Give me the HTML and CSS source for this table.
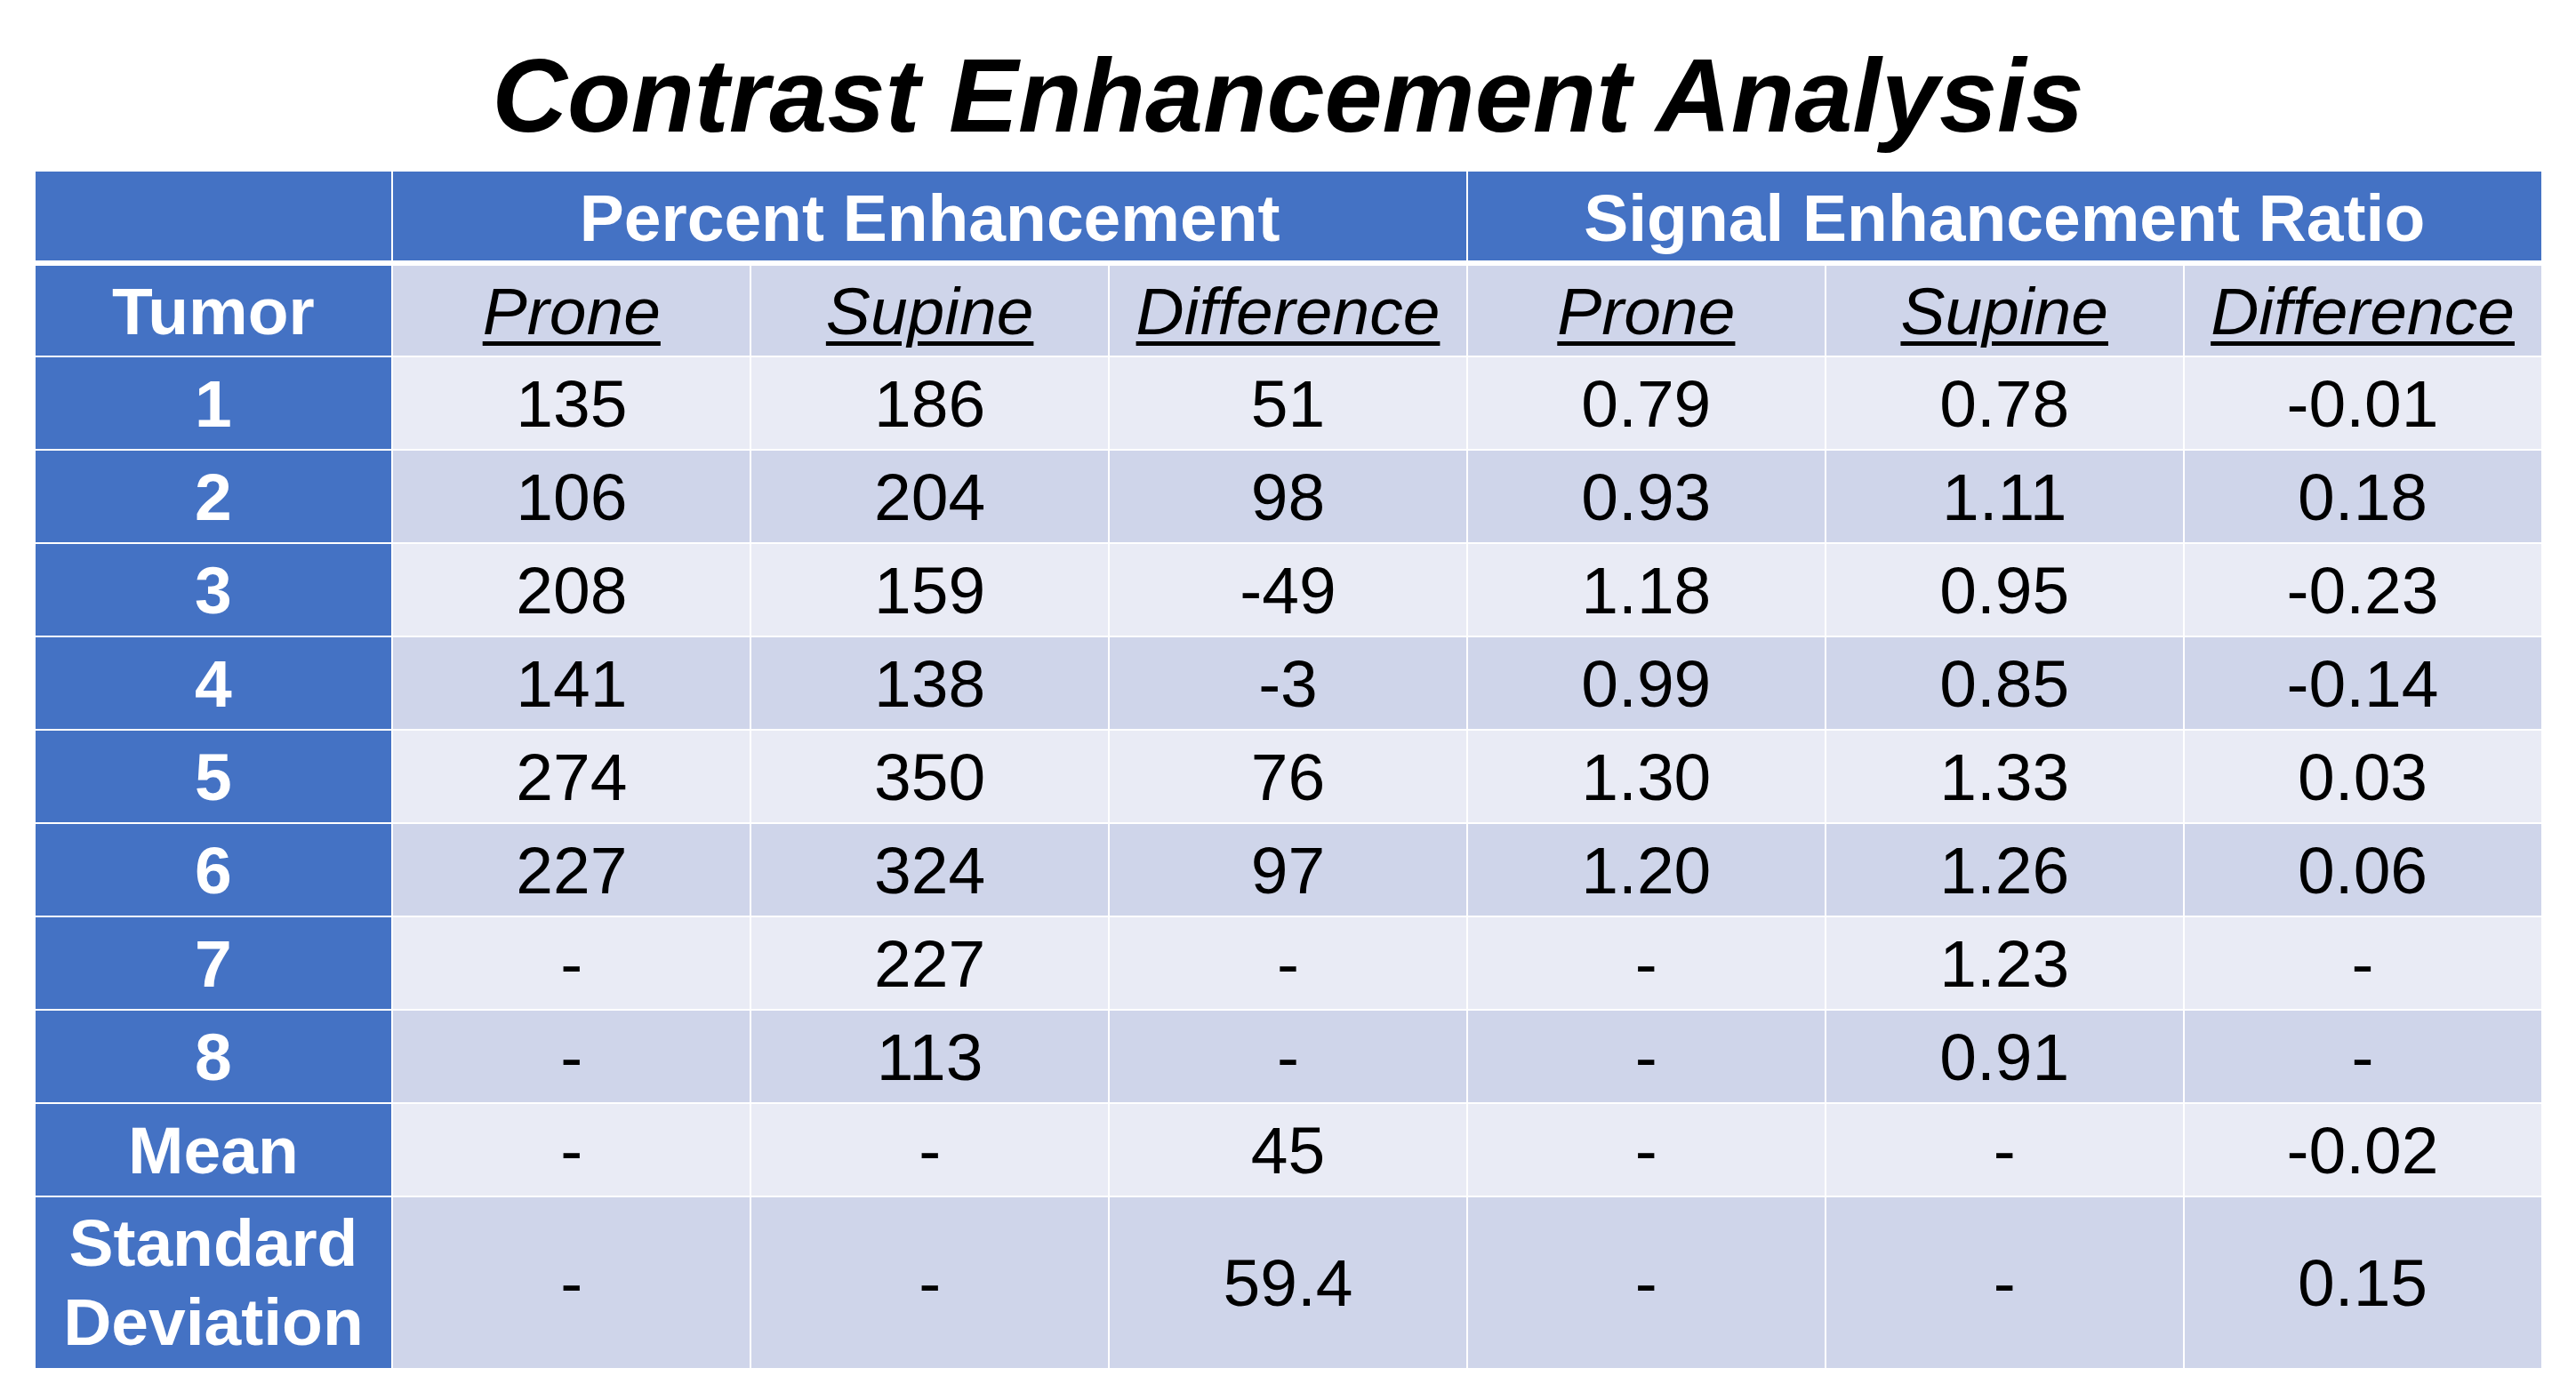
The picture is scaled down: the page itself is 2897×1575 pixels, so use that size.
FILE: index.html
```html
<!DOCTYPE html>
<html lang="en">
<head>
<meta charset="utf-8">
<title>Contrast Enhancement Analysis</title>
<link rel="stylesheet" href="styles.css">
</head>
<body>
<div class="page">
  <h1 class="title">Contrast Enhancement Analysis</h1>
  <div class="table">
    <div class="cell head corner"></div>
    <div class="cell head group span3">Percent Enhancement</div>
    <div class="cell head group span3">Signal Enhancement Ratio</div>

    <div class="cell side sub">Tumor</div>
    <div class="cell dark sub"><u>Prone</u></div>
    <div class="cell dark sub"><u>Supine</u></div>
    <div class="cell dark sub"><u>Difference</u></div>
    <div class="cell dark sub"><u>Prone</u></div>
    <div class="cell dark sub"><u>Supine</u></div>
    <div class="cell dark sub"><u>Difference</u></div>

    <div class="cell side">1</div>
    <div class="cell light">135</div><div class="cell light">186</div><div class="cell light">51</div>
    <div class="cell light">0.79</div><div class="cell light">0.78</div><div class="cell light">-0.01</div>

    <div class="cell side">2</div>
    <div class="cell dark">106</div><div class="cell dark">204</div><div class="cell dark">98</div>
    <div class="cell dark">0.93</div><div class="cell dark">1.11</div><div class="cell dark">0.18</div>

    <div class="cell side">3</div>
    <div class="cell light">208</div><div class="cell light">159</div><div class="cell light">-49</div>
    <div class="cell light">1.18</div><div class="cell light">0.95</div><div class="cell light">-0.23</div>

    <div class="cell side">4</div>
    <div class="cell dark">141</div><div class="cell dark">138</div><div class="cell dark">-3</div>
    <div class="cell dark">0.99</div><div class="cell dark">0.85</div><div class="cell dark">-0.14</div>

    <div class="cell side">5</div>
    <div class="cell light">274</div><div class="cell light">350</div><div class="cell light">76</div>
    <div class="cell light">1.30</div><div class="cell light">1.33</div><div class="cell light">0.03</div>

    <div class="cell side">6</div>
    <div class="cell dark">227</div><div class="cell dark">324</div><div class="cell dark">97</div>
    <div class="cell dark">1.20</div><div class="cell dark">1.26</div><div class="cell dark">0.06</div>

    <div class="cell side">7</div>
    <div class="cell light">-</div><div class="cell light">227</div><div class="cell light">-</div>
    <div class="cell light">-</div><div class="cell light">1.23</div><div class="cell light">-</div>

    <div class="cell side">8</div>
    <div class="cell dark">-</div><div class="cell dark">113</div><div class="cell dark">-</div>
    <div class="cell dark">-</div><div class="cell dark">0.91</div><div class="cell dark">-</div>

    <div class="cell side">Mean</div>
    <div class="cell light">-</div><div class="cell light">-</div><div class="cell light">45</div>
    <div class="cell light">-</div><div class="cell light">-</div><div class="cell light">-0.02</div>

    <div class="cell side two-line">Standard<br>Deviation</div>
    <div class="cell dark">-</div><div class="cell dark">-</div><div class="cell dark">59.4</div>
    <div class="cell dark">-</div><div class="cell dark">-</div><div class="cell dark">0.15</div>
  </div>
</div>
</body>
</html>
```
FILE: styles.css
```css
html, body {
  margin: 0;
  padding: 0;
  background: #ffffff;
}

.page {
  width: 2897px;
  height: 1575px;
  display: flex;
  flex-direction: column;
  align-items: center;
  font-family: "Liberation Sans", Arial, sans-serif;
}

.title {
  margin: 50px 0 0 0;
  font-size: 117px;
  line-height: 116px;
  height: 116px;
  font-weight: bold;
  font-style: italic;
  color: #000000;
}

.table {
  margin-top: 27px;
  width: 2818px;
  display: grid;
  grid-template-columns: repeat(7, 1fr);
  grid-template-rows: 104px 101px repeat(9, 103px) 192px;
  column-gap: 2px;
  row-gap: 2px;
  background: #ffffff;
}

.cell {
  display: flex;
  align-items: center;
  justify-content: center;
  text-align: center;
  font-size: 75px;
  line-height: 86px;
  color: #000000;
}

.head {
  background: #4472c4;
  color: #ffffff;
  font-weight: bold;
  margin-bottom: 4px;
}

.head.group {
  padding-top: 4px;
}

.span3 {
  grid-column: span 3;
}

.side {
  background: #4472c4;
  color: #ffffff;
  font-weight: bold;
}

.light {
  background: #e9ebf5;
}

.dark {
  background: #cfd5ea;
}

.sub u {
  font-style: italic;
  text-decoration: underline;
  text-decoration-thickness: 5px;
  text-underline-offset: 8px;
}

.two-line {
  line-height: 89px;
}
```
